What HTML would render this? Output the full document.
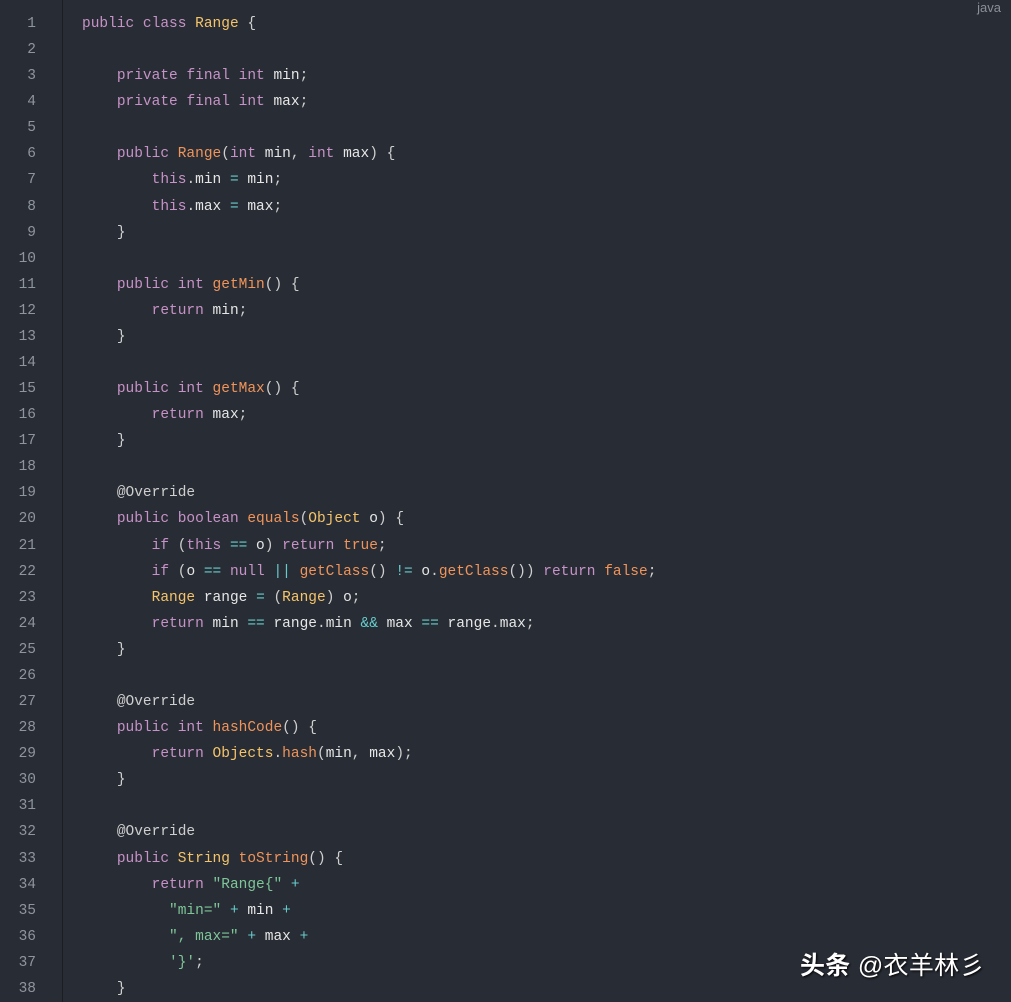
<!DOCTYPE html>
<html><head><meta charset="utf-8"><style>
html,body{margin:0;padding:0;background:#282c34;width:1011px;height:1002px;overflow:hidden}
.gut{position:absolute;left:62px;top:0;width:1px;height:1002px;background:#1b1d23}
.ln{position:absolute;left:0;top:11px;width:36px;text-align:right;font:14.5px/26.08px "Liberation Mono",monospace;color:#8f959e}
pre{position:absolute;left:82px;top:11px;margin:0;font:14.5px/26.08px "Liberation Mono",monospace;color:#e6e6e6}
.k{color:#c792c7}.f{color:#f0945a}.c{color:#f5c46a}.s{color:#7ec699}.o{color:#67cdcc}.p{color:#cfcfcf}
.java{position:absolute;right:10px;top:0px;font:13px "Liberation Sans",sans-serif;color:#8a8f98}
.wm{position:absolute;left:800px;top:946px;font:bold 25px "Liberation Sans","Noto Sans CJK SC",sans-serif;color:#fff;text-shadow:1px 1px 2px #000;letter-spacing:0.3px}
.wm span{font-weight:normal}
</style></head><body>
<div class="gut"></div>
<div class="java">java</div>
<div class="ln">1<br>2<br>3<br>4<br>5<br>6<br>7<br>8<br>9<br>10<br>11<br>12<br>13<br>14<br>15<br>16<br>17<br>18<br>19<br>20<br>21<br>22<br>23<br>24<br>25<br>26<br>27<br>28<br>29<br>30<br>31<br>32<br>33<br>34<br>35<br>36<br>37<br>38</div>
<pre><span class="k">public</span> <span class="k">class</span> <span class="c">Range</span> <span class="p">{</span>

    <span class="k">private</span> <span class="k">final</span> <span class="k">int</span> min<span class="p">;</span>
    <span class="k">private</span> <span class="k">final</span> <span class="k">int</span> max<span class="p">;</span>

    <span class="k">public</span> <span class="f">Range</span><span class="p">(</span><span class="k">int</span> min<span class="p">,</span> <span class="k">int</span> max<span class="p">)</span> <span class="p">{</span>
        <span class="k">this</span><span class="p">.</span>min <span class="o">=</span> min<span class="p">;</span>
        <span class="k">this</span><span class="p">.</span>max <span class="o">=</span> max<span class="p">;</span>
    <span class="p">}</span>

    <span class="k">public</span> <span class="k">int</span> <span class="f">getMin</span><span class="p">()</span> <span class="p">{</span>
        <span class="k">return</span> min<span class="p">;</span>
    <span class="p">}</span>

    <span class="k">public</span> <span class="k">int</span> <span class="f">getMax</span><span class="p">()</span> <span class="p">{</span>
        <span class="k">return</span> max<span class="p">;</span>
    <span class="p">}</span>

    <span class="p">@Override</span>
    <span class="k">public</span> <span class="k">boolean</span> <span class="f">equals</span><span class="p">(</span><span class="c">Object</span> o<span class="p">)</span> <span class="p">{</span>
        <span class="k">if</span> <span class="p">(</span><span class="k">this</span> <span class="o">==</span> o<span class="p">)</span> <span class="k">return</span> <span class="f">true</span><span class="p">;</span>
        <span class="k">if</span> <span class="p">(</span>o <span class="o">==</span> <span class="k">null</span> <span class="o">||</span> <span class="f">getClass</span><span class="p">()</span> <span class="o">!=</span> o<span class="p">.</span><span class="f">getClass</span><span class="p">())</span> <span class="k">return</span> <span class="f">false</span><span class="p">;</span>
        <span class="c">Range</span> range <span class="o">=</span> <span class="p">(</span><span class="c">Range</span><span class="p">)</span> o<span class="p">;</span>
        <span class="k">return</span> min <span class="o">==</span> range<span class="p">.</span>min <span class="o">&amp;&amp;</span> max <span class="o">==</span> range<span class="p">.</span>max<span class="p">;</span>
    <span class="p">}</span>

    <span class="p">@Override</span>
    <span class="k">public</span> <span class="k">int</span> <span class="f">hashCode</span><span class="p">()</span> <span class="p">{</span>
        <span class="k">return</span> <span class="c">Objects</span><span class="p">.</span><span class="f">hash</span><span class="p">(</span>min<span class="p">,</span> max<span class="p">);</span>
    <span class="p">}</span>

    <span class="p">@Override</span>
    <span class="k">public</span> <span class="c">String</span> <span class="f">toString</span><span class="p">()</span> <span class="p">{</span>
        <span class="k">return</span> <span class="s">"Range{"</span> <span class="o">+</span>
          <span class="s">"min="</span> <span class="o">+</span> min <span class="o">+</span>
          <span class="s">", max="</span> <span class="o">+</span> max <span class="o">+</span>
          <span class="s">'}'</span><span class="p">;</span>
    <span class="p">}</span></pre>
<div class="wm">头条 <span>@衣羊林彡</span></div>
</body></html>
